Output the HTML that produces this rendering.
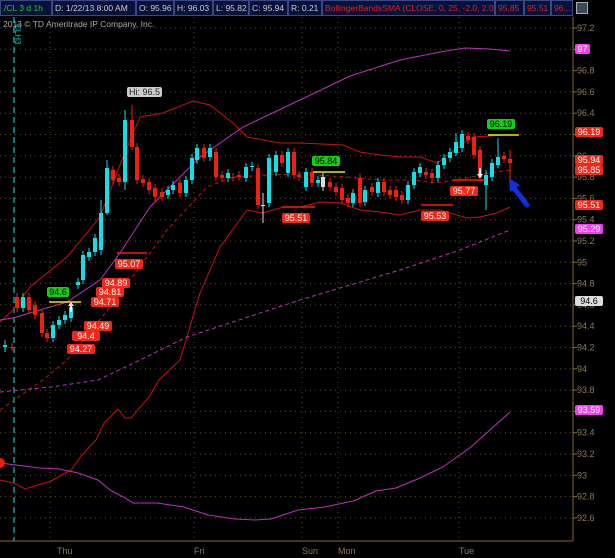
<!DOCTYPE html>
<html><head><meta charset="utf-8"><style>
body{margin:0;background:#000;width:615px;height:558px;overflow:hidden;font-family:"Liberation Sans",sans-serif}
.h div{border:1px solid #3a4a80;box-sizing:border-box;color:#ccc;padding-left:2px;white-space:nowrap;overflow:hidden}
</style></head><body>
<svg id="s" width="615" height="558" xmlns="http://www.w3.org/2000/svg" style="position:absolute;left:0;top:0" font-family="Liberation Sans, sans-serif">
<rect width="615" height="558" fill="#000"/>
<g id="grid"></g>
<line x1="14" y1="17" x2="14" y2="541" stroke="#0aa0a0" stroke-width="1.5" stroke-dasharray="6,4"/>
<polyline fill="none" stroke="#c8140a" stroke-width="1" points="0,322 13,310 30,287 67,257 100,217 123,157 140,117 163,113 193,101 210,105 233,123 247,137 280,143 300,143 343,145 360,152 380,155 400,157 420,157 437,163 457,148 463,143 473,137 490,136 503,135"/>
<polyline fill="none" stroke="#c8140a" stroke-width="1" points="0,480 14,483 25,489 51,481 71,470 82,455 96,440 104,423 118,409 125,418 131,418 149,397 159,380 180,360 200,293 220,247 247,210 263,213 283,207 300,207 320,202 340,203 360,210 380,212 400,215 420,210 440,210 467,218 480,217 497,213 510,207"/>
<polyline fill="none" stroke="#c8140a" stroke-width="1" stroke-dasharray="4,3" points="0,410 24,393 43,380 67,360 110,307 167,230 207,187 233,177 267,175 300,174 347,177 380,180 413,180 437,183 457,180 490,173 510,170"/>
<polyline fill="none" stroke="#c030c0" stroke-width="1" points="0,320 13,318 40,310 67,302 100,280 120,253 150,207 200,157 243,127 300,100 350,76 400,60 440,52 465,48 490,49 510,51"/>
<polyline fill="none" stroke="#c030c0" stroke-width="1" stroke-dasharray="4,3" points="0,392 51,387 98,380 140,360 187,337 300,300 400,270 460,250 510,230"/>
<polyline fill="none" stroke="#c030c0" stroke-width="1" points="0,463 16,465 39,468 59,469 78,473 98,480 110,490 125,498 133,503 157,503 184,507 208,515 235,519 255,520 271,519 298,510 325,507 353,501 376,491 396,488 420,478 443,467 471,447 510,412"/>
<g id="candles"></g>
<g id="labels"></g>
<line x1="573" y1="17" x2="573" y2="541" stroke="#8a6a2a"/>
<line x1="0" y1="541" x2="573" y2="541" stroke="#8a6a2a"/>
<g fill="#8a7a5a" font-size="9">
<text x="57" y="554">Thu</text><text x="194" y="554">Fri</text><text x="302" y="554">Sun</text><text x="338" y="554">Mon</text><text x="459" y="554">Tue</text>
</g>
<text x="3" y="27" fill="#aaa" font-size="8.5">2013 © TD Ameritrade IP Company, Inc.</text>
<text x="15" y="24" fill="#0cc" font-size="8" transform="rotate(90 15 24)">CLH3</text>
<path d="M527,205 L514,188" stroke="#1030e0" stroke-width="5" stroke-linecap="round"/>
<path d="M509,178 L520,185 L510,192 Z" fill="#1030e0"/>
<path d="M0,458 a5,5 0 0 1 0,10 Z" fill="#e8200a"/>
</svg>
<div class="h" style="position:absolute;left:0;top:0;width:573px;height:16px;background:#06123c;font-size:8.5px;line-height:14px;display:flex">
<div style="width:52px;color:#2c2;padding-left:3px">/CL 3 d 1h</div>
<div style="width:84px">D: 1/22/13 8:00 AM</div>
<div style="width:38px">O: 95.96</div>
<div style="width:39px">H: 96.03</div>
<div style="width:36px">L: 95.82</div>
<div style="width:39px">C: 95.94</div>
<div style="width:34px">R: 0.21</div>
<div style="width:173px;color:#e02020">BollingerBandsSMA (CLOSE, 0, 25, -2.0, 2.0)</div>
<div style="width:29px;color:#e02020">95.85</div>
<div style="width:27px;color:#e02020">95.51</div>
<div style="width:22px;color:#e02020">96....</div>
</div>
<div style="position:absolute;left:576px;top:2px;width:12px;height:12px;background:#3a4a5a;border:1px solid #aaa;box-sizing:border-box"></div>
<script>
function Y(p){return 28+(97.2-p)*106.5;}
var g='';
for(var i=0;i<=23;i++){var p=92.6+i*0.2;var y=Y(p).toFixed(1);
g+='<line x1="0" y1="'+y+'" x2="573" y2="'+y+'" stroke="#6a5020" stroke-dasharray="1,4"/>';
g+='<line x1="573" y1="'+y+'" x2="577" y2="'+y+'" stroke="#8a6a2a"/>';
var t=(Math.round(p*10)/10).toString();
g+='<text x="577" y="'+(+y+3)+'" fill="#8a7a5a" font-size="9">'+t+'</text>';}
[50,194,302,338,459].forEach(function(x){g+='<line x1="'+x+'" y1="17" x2="'+x+'" y2="541" stroke="#6a5020" stroke-dasharray="1,4"/>';});
document.getElementById('grid').innerHTML=g;
var c=[[5,'c',345,347],[12,'r',347,347],[17,'r',297,308],[23,'c',297,308],[29,'r',297,310],[35,'r',305,315],[42,'r',313,333],[47,'r',333,338],[53,'c',325,338],[59,'c',320,325],[65,'c',315,320],[71,'c',307,318],[78,'c',282,285],[83,'c',255,280],[89,'c',252,257],[95,'c',238,252],[101,'c',213,250],[107,'c',168,213],[113,'r',170,180],[119,'r',178,182],[125,'c',120,182],[132,'r',120,147],[137,'r',147,180],[143,'r',179,183],[149,'r',182,190],[155,'r',188,197],[162,'r',192,197],[168,'c',190,195],[173,'c',185,190],[180,'r',183,193],[186,'c',180,193],[192,'c',158,180],[197,'c',148,160],[204,'r',148,158],[210,'c',148,157],[216,'r',152,177],[222,'r',175,178],[228,'c',173,178],[233,'r',177,177],[239,'r',175,177],[246,'c',167,178],[252,'c',166,167],[258,'r',168,205],[263,'w',205,205],[269,'c',158,203],[276,'c',155,172],[282,'r',155,163],[288,'c',152,173],[294,'r',152,175],[299,'r',175,177],[306,'c',172,187],[312,'r',172,183],[318,'c',180,183],[323,'w',177,187],[330,'r',182,187],[336,'r',187,192],[342,'r',188,200],[348,'r',198,203],[353,'c',193,203],[360,'r',178,203],[365,'c',190,202],[372,'r',187,192],[378,'c',182,193],[384,'r',182,192],[390,'r',190,195],[396,'r',190,197],[402,'r',195,200],[408,'c',185,200],[414,'c',172,185],[420,'c',167,173],[426,'r',172,175],[432,'r',173,178],[438,'c',165,178],[444,'c',158,165],[450,'c',152,158],[456,'c',142,153],[462,'c',134,148],[468,'r',136,140],[474,'r',137,155],[480,'r',150,178],[486,'c',175,185],[492,'c',163,177],[498,'c',157,165],[504,'r',156,159],[510,'r',159,163]];
var wk={5:[340,352],125:[110,190],132:[105,150],263:[193,223],456:[133,156],486:[170,210],498:[138,168],510:[150,180],101:[200,255],107:[160,215]};
var s='';
c.forEach(function(d){var col=d[1]=='c'?'#10e0e8':d[1]=='r'?'#f02010':'#ddd';
var w=wk[d[0]]||[d[2]-4,d[3]+4];
s+='<line x1="'+d[0]+'" y1="'+w[0]+'" x2="'+d[0]+'" y2="'+w[1]+'" stroke="'+col+'"/>';
s+='<rect x="'+(d[0]-2)+'" y="'+d[2]+'" width="4" height="'+Math.max(1,d[3]-d[2])+'" fill="'+col+'"/>';});
s+='<path d="M68,306 l3,-4 3,4 h-2 v6 h-2 v-6z" fill="#fff"/>';
s+='<path d="M477,174 l3,4 3,-4 h-2 v-6 h-2 v6z" fill="#fff"/>';
document.getElementById('candles').innerHTML=s;
var L='';
function lab(x,y,w,t,bg,fg){L+='<rect x="'+x+'" y="'+y+'" width="'+w+'" height="10" rx="2" fill="'+bg+'"/><text x="'+(x+w/2)+'" y="'+(y+8)+'" fill="'+fg+'" font-size="9" text-anchor="middle">'+t+'</text>';}
L+='<line x1="488" y1="135" x2="519" y2="135" stroke="#e8e810" stroke-width="1.5"/><line x1="313" y1="172" x2="345" y2="172" stroke="#e8e810" stroke-width="1.5"/><line x1="49" y1="302" x2="81" y2="302" stroke="#e8e810" stroke-width="1.5"/>';
L+='<line x1="117" y1="253" x2="147" y2="253" stroke="#f02010" stroke-width="1.5"/><line x1="282" y1="207" x2="315" y2="207" stroke="#f02010" stroke-width="1.5"/><line x1="421" y1="205" x2="453" y2="205" stroke="#f02010" stroke-width="1.5"/><line x1="453" y1="180" x2="485" y2="180" stroke="#f02010" stroke-width="1.5"/>';
lab(127,87,35,'Hi: 96.5','#ccc','#222');
lab(487,119,28,'96.19','#10d010','#000');lab(312,156,28,'95.84','#10d010','#000');lab(47,287,22,'94.6','#10d010','#000');
[[115,259,'95.07'],[102,278,'94.89'],[96,287,'94.81'],[91,297,'94.71'],[84,321,'94.49'],[72,331,'94.4'],[67,344,'94.27'],[282,213,'95.51'],[421,211,'95.53'],[450,186,'95.77']].forEach(function(a){lab(a[0],a[1],28,a[2],'#f02818','#fff');});
lab(575,44,15,'97','#f040f0','#fff');lab(575,127,28,'96.19','#f02818','#fff');lab(575,155,28,'95.94','#f02818','#fff');lab(575,165,28,'95.85','#f02818','#fff');lab(575,200,28,'95.51','#f02818','#fff');lab(575,224,28,'95.29','#f040f0','#fff');lab(575,296,28,'94.6','#ddd','#000');lab(575,405,28,'93.59','#f040f0','#fff');
document.getElementById('labels').innerHTML=L;
</script>
</body></html>
